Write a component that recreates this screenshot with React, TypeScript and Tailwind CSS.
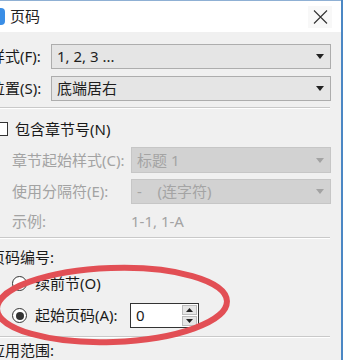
const font = "font-['Noto_Sans','Noto_Sans_CJK_SC',sans-serif]";

const Arrow = ({ disabled }: { disabled?: boolean }) => (
  <svg width="8" height="5" viewBox="0 0 8 5" className="shrink-0">
    <path d="M0 0 H8 L4 5 Z" fill={disabled ? "#a3a3a3" : "#222"} />
  </svg>
);

const Select = ({ value, width, disabled }: { value: string; width: string; disabled?: boolean }) => (
  <div
    className={`${width} h-full flex items-center justify-between pl-[5px] pr-[6px] border ${
      disabled ? "border-[#c6c6c6] bg-[#d2d2d2] text-[#a4a4a4]" : "border-[#adadad] bg-[#e5e5e5] text-[#1e1e1e]"
    }`}
  >
    <span className="whitespace-pre">{value}</span>
    <Arrow disabled={disabled} />
  </div>
);

const Radio = ({ checked }: { checked?: boolean }) => (
  <div className="w-[15px] h-[15px] rounded-full border border-[#333] bg-white flex items-center justify-center shrink-0">
    {checked && <div className="w-[8px] h-[8px] rounded-full bg-[#333]" />}
  </div>
);

const Separator = () => <div className="h-px bg-[#c9c9c9] mr-[11px] border-b border-white box-content" />;

export default function App() {
  return (
    <div className={`relative w-[343px] h-[360px] overflow-hidden flex bg-[#f0f0f0] text-[15px] leading-none text-[#1a1a1a] ${font}`}>
      <div className="w-[341px] flex flex-col border-t border-[#8fb0d4]">
        {/* Title bar */}
        <div className="h-[31px] bg-white flex items-center shrink-0">
          <div className="w-[17px] h-[17px] -ml-[12px] rounded-[4px] bg-[#3a8ee6]" />
          <span className="ml-[5px] text-[15px] text-[#222]">页码</span>
          <div className="ml-auto mr-[9px] w-[24px] h-[22px] flex items-center justify-center bg-[#f8f8f8]">
            <svg width="15" height="14" viewBox="0 0 15 14">
              <path d="M1 0.5 L14 13.5 M14 0.5 L1 13.5" stroke="#333" strokeWidth="1.1" />
            </svg>
          </div>
        </div>

        {/* Body */}
        <div className="-ml-[10px] flex flex-col">
          <div className="mt-[12px] h-[25px] flex items-center">
            <span className="w-[61px]">样式(F):</span>
            <Select value="1, 2, 3 ..." width="w-[280px]" />
          </div>
          <div className="mt-[7px] h-[25px] flex items-center">
            <span className="w-[61px]">位置(S):</span>
            <Select value="底端居右" width="w-[280px]" />
          </div>
          <div className="mt-[6px]">
            <Separator />
          </div>

          <div className="mt-[13px] h-[14px] flex items-center">
            <div className="ml-[4px] w-[14px] h-[14px] border border-[#333] bg-white" />
            <span className="ml-[7px]">包含章节号(N)</span>
          </div>

          <div className="mt-[11px] h-[26px] flex items-center text-[#a3a3a3]">
            <span className="pl-[22px] w-[141px]">章节起始样式(C):</span>
            <Select value="标题 1" width="w-[200px]" disabled />
          </div>
          <div className="mt-[6px] h-[25px] flex items-center text-[#a3a3a3]">
            <span className="pl-[22px] w-[141px]">使用分隔符(E):</span>
            <Select value="-    (连字符)" width="w-[200px]" disabled />
          </div>
          <div className="mt-[7px] h-[20px] flex items-center text-[#a3a3a3]">
            <span className="pl-[22px] w-[141px]">示例:</span>
            <span>1-1, 1-A</span>
          </div>
          <div className="mt-[6px]">
            <Separator />
          </div>

          <div className="mt-[8px] h-[20px] flex items-center">
            <span>页码编号:</span>
          </div>
          <div className="mt-[6px] h-[20px] flex items-center">
            <div className="ml-[22px]">
              <Radio />
            </div>
            <span className="ml-[8px]">续前节(O)</span>
          </div>
          <div className="mt-[10px] h-[25px] flex items-center">
            <div className="ml-[22px]">
              <Radio checked />
            </div>
            <span className="ml-[8px] w-[95px]">起始页码(A):</span>
            <div className="w-[69px] h-full border border-[#333] bg-white flex items-center justify-between pl-[5px] pr-[1px]">
              <span>0</span>
              <div className="w-[15px] h-[21px] flex flex-col gap-px">
                <div className="flex-1 bg-[#e6e6e6] border border-[#bcbcbc] flex items-center justify-center">
                  <svg width="7" height="4" viewBox="0 0 7 4">
                    <path d="M0 4 H7 L3.5 0 Z" fill="#222" />
                  </svg>
                </div>
                <div className="flex-1 bg-[#e6e6e6] border border-[#bcbcbc] flex items-center justify-center">
                  <svg width="7" height="4" viewBox="0 0 7 4">
                    <path d="M0 0 H7 L3.5 4 Z" fill="#222" />
                  </svg>
                </div>
              </div>
            </div>
          </div>
          <div className="mt-[8px]">
            <Separator />
          </div>
          <div className="mt-[2px] h-[20px] flex items-center">
            <span>应用范围:</span>
          </div>
        </div>
      </div>
      <div className="w-[2px] bg-[#4b87c4]" />

      {/* Red highlight ellipse */}
      <svg className="absolute inset-0 pointer-events-none" width="343" height="360" viewBox="0 0 343 360">
        <ellipse cx="112" cy="305" rx="115" ry="37" fill="none" stroke="#e24f55" strokeWidth="6" transform="rotate(-2 112 305)" />
      </svg>
    </div>
  );
}
